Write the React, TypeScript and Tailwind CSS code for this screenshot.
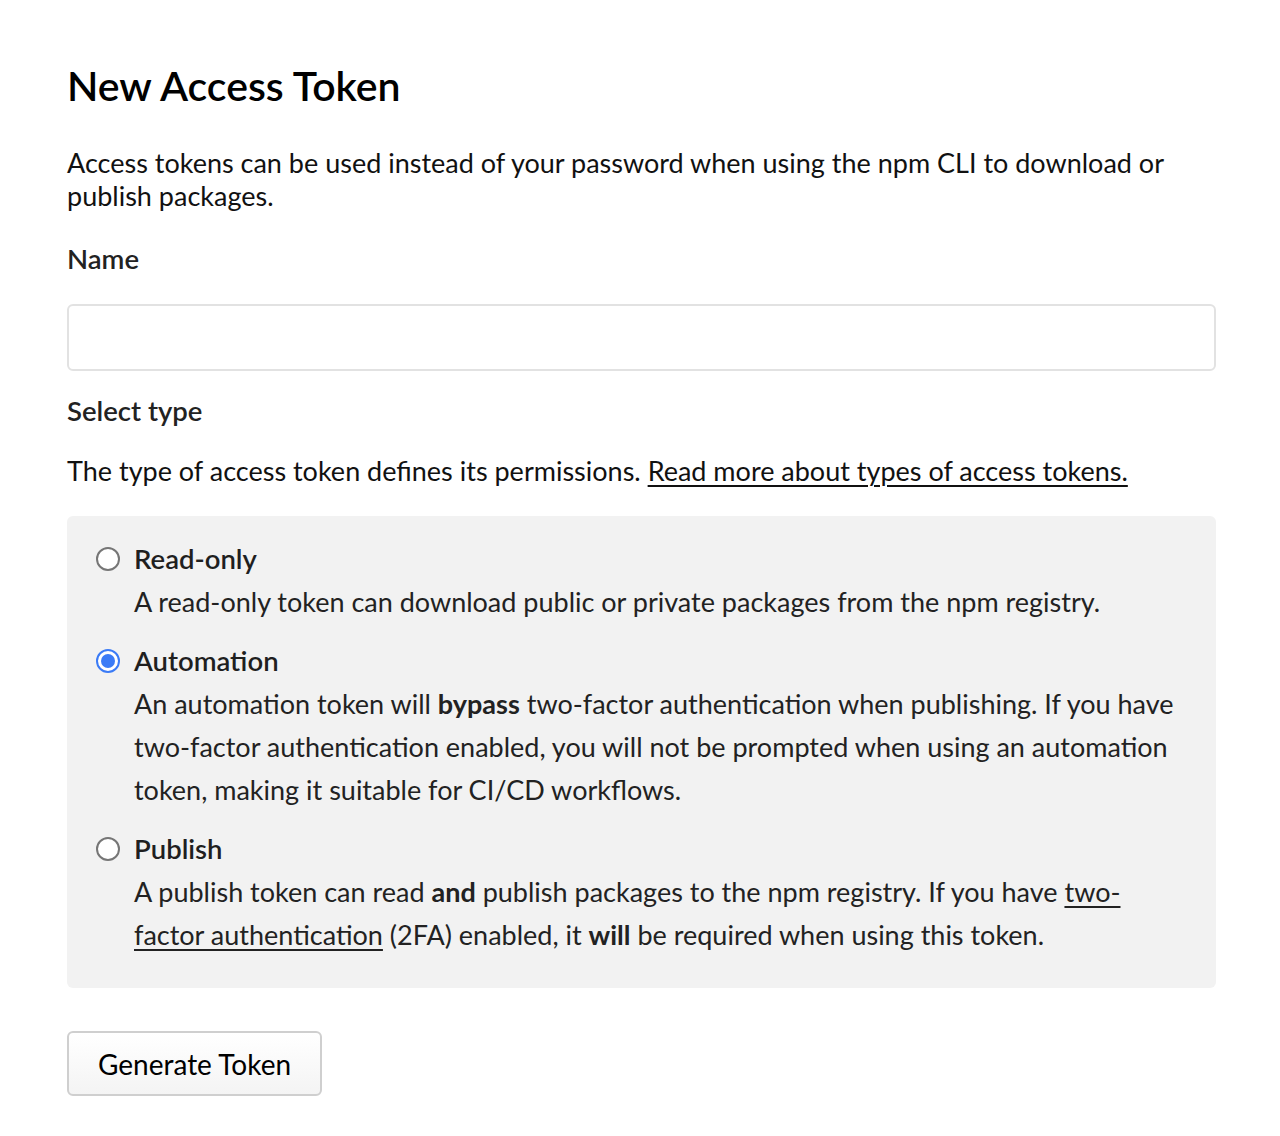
import React from "react";

function Radio({ checked }: { checked?: boolean }) {
  if (checked) {
    return (
      <span className="mt-[5px] flex h-[24px] w-[24px] shrink-0 items-center justify-center rounded-full border-2 border-[#3b7bf6] bg-white">
        <span className="h-[14px] w-[14px] rounded-full bg-[#3b7bf6]" />
      </span>
    );
  }
  return <span className="mt-[5px] h-[24px] w-[24px] shrink-0 rounded-full border-2 border-[#767676] bg-white" />;
}

function Option({
  checked,
  title,
  children,
}: {
  checked?: boolean;
  title: string;
  children: React.ReactNode;
}) {
  return (
    <label className="flex gap-[14px]">
      <Radio checked={checked} />
      <div className="flex-1">
        <div className="text-[27.5px] font-semibold leading-[34px] text-[#1f1f1f]">{title}</div>
        <p className="mt-[4px] text-[27px] leading-[43px] text-[#222]">{children}</p>
      </div>
    </label>
  );
}

export default function App() {
  return (
    <div className="min-h-[1136px] bg-white pl-[67px] pr-[64px] pt-[60px] text-[#111] [font-family:Lato,'Noto_Sans',sans-serif]">
      <h1 className="text-[41px] font-semibold leading-[52px] text-black">New Access Token</h1>

      <p className="mt-[34px] text-[27px] leading-[33px]">
        Access tokens can be used instead of your password when using the npm CLI to download or publish packages.
      </p>

      <div className="mt-[30px] text-[27.5px] font-semibold leading-[33px] text-[#222]">Name</div>
      <input
        type="text"
        className="mt-[29px] block h-[67px] w-full rounded-[6px] border-2 border-[#e2e2e2] bg-white px-4 text-[24px] outline-none"
      />

      <div className="mt-[23px] text-[27.5px] font-semibold leading-[33px] text-[#222]">Select type</div>
      <p className="mt-[27px] text-[27px] leading-[33px]">
        The type of access token defines its permissions.{" "}
        <a href="#" className="underline decoration-[2px] underline-offset-[4px]">
          Read more about types of access tokens.
        </a>
      </p>

      <div className="mt-[29px] flex flex-col gap-[21px] rounded-[6px] bg-[#f2f2f2] pb-[32px] pl-[29px] pr-[30px] pt-[26px]">
        <Option title="Read-only">
          A read-only token can download public or private packages from the npm registry.
        </Option>
        <Option checked title="Automation">
          An automation token will <b>bypass</b> two-factor authentication when publishing. If you have two-factor
          authentication enabled, you will not be prompted when using an automation token, making it suitable for CI/CD
          workflows.
        </Option>
        <Option title="Publish">
          A publish token can read <b>and</b> publish packages to the npm registry. If you have{" "}
          <a href="#" className="underline decoration-[2px] underline-offset-[4px]">
            two-factor authentication
          </a>{" "}
          (2FA) enabled, it <b>will</b> be required when using this token.
        </Option>
      </div>

      <button className="mt-[43px] h-[65px] w-[255px] rounded-[6px] border-2 border-[#cfcfcf] bg-gradient-to-b from-white to-[#f4f4f4] text-[28px] text-black">
        Generate Token
      </button>
    </div>
  );
}
